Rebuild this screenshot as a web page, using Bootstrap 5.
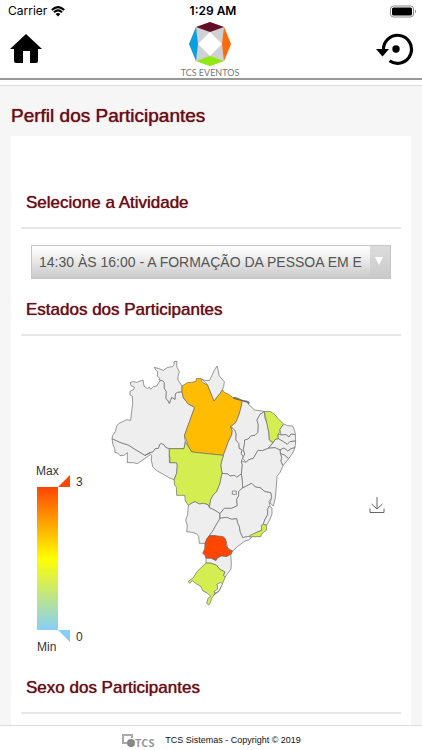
<!DOCTYPE html>
<html lang="pt-BR">
<head>
<meta charset="utf-8">
<meta name="viewport" content="width=device-width, initial-scale=1">
<title>TCS Eventos - Perfil dos Participantes</title>
<link href="https://cdn.jsdelivr.net/npm/bootstrap@5.3.0/dist/css/bootstrap.min.css" rel="stylesheet">
<style>
body{font-family:"Liberation Sans",Arial,sans-serif;background:#f6f6f6;color:#333}
.topbar{border-bottom:2px solid #999}
.status{font-family:Inter,sans-serif;font-size:12px;line-height:22px;height:22px}
.status-time{font-weight:600}
.brand-name{font-family:Lato,sans-serif;font-size:9px;line-height:10px;color:#777}
.strip{height:6px;border-bottom:1px solid #ddd}
.heading{color:#6a0f18;font-weight:400;text-shadow:0 0 1px #6a0f18;margin:0}
.heading-page{font-size:19px;line-height:24px;padding:18px 11px 8px}
.heading-block{font-size:17px;line-height:24px;padding:0 5px 12px;border-bottom:2px solid #e7e7e9}
.panel{padding:55px 10px 11px;margin:0 11px}
.activity-field{padding:16px 10px 19px}
.activity{appearance:none;width:100%;height:34px;border:1px solid #c6c6c6;border-radius:0;padding:0 27px 0 7px;font-size:14px;color:#555;overflow:hidden;
background:url("data:image/svg+xml,%3Csvg xmlns='http://www.w3.org/2000/svg' width='8' height='8'%3E%3Cpath d='M0 0h8L4 8z' fill='white'/%3E%3C/svg%3E") no-repeat right 7px top 11px,linear-gradient(#dcdcdc,#cacaca) no-repeat right/20px 100%,linear-gradient(#fff,#f2f2f2 30%,#c9c9c9)}
.chart{padding:24px 16px 20px 15px}
.legend{margin-top:100px;margin-right:22px}
.legend text{font-size:12px;fill:#333}
.save{margin-top:136px}
.state path{fill:#eee;stroke:#666;stroke-width:2;stroke-linejoin:round}
.state .n1{fill:#d4ee51}
.state .n2{fill:#ffbc00}
.state .n3{fill:#ff4500}
.state .lagoon{fill:#fff}
.state .coast{fill:none;stroke-width:4}
.bottombar{border-top:1px solid #ddd;height:26px;font-size:9px;color:#111}
.icon-link-plain{color:#000;line-height:0}
</style>
<script src="https://cdn.jsdelivr.net/npm/bootstrap@5.3.0/dist/js/bootstrap.bundle.min.js"></script>
</head>
<body class="d-flex flex-column min-vh-100">
<header class="topbar bg-white">
  <div class="status row g-0 text-black">
    <div class="col d-flex align-items-center ps-2 gap-1">Carrier
      <svg width="14" height="11" viewBox="0 0 14 11" fill="none" stroke="#000" stroke-width="2"><path d="M.8 4Q7-1.8 13.200 4M3 6.300Q7 2.500 11 6.300"/><path d="M7 10.500 4.600 8Q7 6 9.400 8z" fill="#000" stroke="none"/></svg>
    </div>
    <div class="col text-center status-time">1:29 AM</div>
    <div class="col d-flex align-items-center justify-content-end pe-1">
      <svg width="28" height="13" viewBox="0 0 28 13"><rect x=".5" y="1" width="23" height="11" rx="3" fill="#fff" stroke="#888"/><rect x="2" y="2.500" width="20" height="8" rx="1.500"/><path d="M25 4.500q2 2 0 4z" fill="#888"/></svg>
    </div>
  </div>
  <div class="d-flex justify-content-between align-items-start ps-2 pe-2">
    <a href="#" class="icon-link-plain pt-2" aria-label="Início"><svg width="36" height="36" viewBox="0 0 36 36"><path d="M18 4 34 19h-4v12q0 2-2 2h-6V21h-7v12H8q-2 0-2-2V19H2z" fill="currentColor"/></svg></a>
    <div class="d-flex flex-column align-items-center">
      <svg width="44" height="46" viewBox="0 0 44 46">
        <path d="M8 5 22 0 36 5 43 22 36 39 22 44 8 39 1 22z" fill="#d0d1d3"/>
        <path d="M8 5 22 0 36 5 22 10z" fill="#650c28"/><path d="M36 5 43 22 36 39 34 22z" fill="#ff6a0b"/><path d="M8 5 1 22 8 39 10 22z" fill="#0aa0e0"/><path d="M8 39 22 34 36 39 22 44z" fill="#91e812"/>
        <path d="M22 10 34 22 22 34 10 22z" fill="#fff"/>
      </svg>
      <span class="brand-name">TCS EVENTOS</span>
    </div>
    <a href="#" class="icon-link-plain pt-2" aria-label="Atualizar"><svg width="38" height="38" viewBox="0 0 38 38"><path d="M7.500 20A14 14 0 1 1 13.500 30.800" fill="none" stroke="currentColor" stroke-width="3.200"/><path d="M0 19h13L6.500 26.500z" fill="currentColor"/><circle cx="20" cy="19" r="3.700" fill="currentColor"/></svg></a>
  </div>
</header>
<div class="strip bg-white"></div>
<main class="flex-grow-1">
  <h1 class="heading heading-page">Perfil dos Participantes</h1>
  <section class="panel bg-white">
    <h2 class="heading heading-block"><label for="activity">Selecione a Atividade</label></h2>
    <div class="activity-field">
      <select id="activity" class="activity d-block"><option>14:30 ÀS 16:00 - A FORMAÇÃO DA PESSOA EM E</option></select>
    </div>
    <h2 class="heading heading-block">Estados dos Participantes</h2>
    <div class="chart d-flex align-items-start">
      <svg class="legend flex-shrink-0" width="52" height="196" viewBox="0 0 52 196" role="img" aria-label="Escala de 0 a 3">
        <defs><linearGradient id="scale" x2="0" y2="1"><stop stop-color="#ff4500"/><stop offset=".5" stop-color="#ff0"/><stop offset="1" stop-color="#87cefa"/></linearGradient></defs>
        <text x="0" y="15">Max</text><text x="40" y="26">3</text>
        <rect x="1" y="27" width="21" height="143" fill="url(#scale)"/>
        <path d="M22 27 34 15V27z" fill="#ff4500"/><path d="M22 170H34V182z" fill="#87cefa"/>
        <text x="40" y="181">0</text><text x="1" y="191">Min</text>
      </svg>
      <svg class="state" width="190" height="256" viewBox="30 30 570 768" role="img" aria-label="Mapa dos estados do Brasil">
        <path d="M36 266 60 277 85 285 105 298 135 316 148 308 152 313 140 322 128 330 112 341 100 338H82V308L72 316 60 317 53 309 45 308 44 295 39 285z"/>
        <path d="M135 316 150 307 158 306 165 296 175 295 179 283 184 280 192 284 197 292 208 296V338H229L232 345 230 370 222 389 205 382 190 373 170 362 158 350 154 330 155 316 148 310z"/>
        <path d="M91 97 93 107 103 111 102 118 90 124 90 135 97 139 98 160 95 185 92 211 80 209 70 214 57 220 50 228 46 245 38 257 36 266 60 277 85 285 105 298 135 316 150 307 158 306 165 296 175 295 179 283 184 280 192 284 197 292 208 296H252L256 275 253 258 263 230 284 172 265 162 250 143 246 125 232 127 226 131 225 148 215 142 208 160 203 150 198 146 199 125 193 115 193 98 188 92 180 92 170 108 160 110 152 118 148 111 142 116 132 108 129 90 110 97 100 95z"/>
        <path d="M163 52 177 56 190 61 203 52 217 50 222 44 222 35 231 34 230 45 231 52 238 65 234 80 234 90 246 108V125L232 127 226 131 225 148 215 142 208 160 203 150 198 146 199 125 193 115 193 98 188 92 177 90 179 85 172 78 173 65 167 60z"/>
        <path class="n2" d="M246 108 262 98 275 97 288 94 289 86 303 85 305 95 316 102 323 105 328 118 335 135 342 153 350 142 360 130 367 119 373 127 388 134 397 142 410 143 427 151 424 168 420 184 415 200 407 218 392 230 397 242 395 255 385 275 378 295 370 316 275 306 265 290 259 270 253 258 263 230 284 172 265 162 250 143 246 125z"/>
        <path d="M305 88 315 91 328 92 336 76 343 60 351 48 354 58 357 76 363 84 373 95 371 110 367 119 360 130 350 142 342 153 335 135 328 118 323 105 316 97z"/>
        <path d="M427 151 440 153 448 156 446 164 456 172 463 180 480 182 493 185 480 193 471 210 475 225 474 247 465 256 452 258 445 267 434 270 433 285 430 298 434 312 430 325 423 310 426 300 417 295 416 280 407 270 408 252 404 240 392 230 407 218 415 200 420 184 424 168z"/>
        <path class="coast" d="M400 144 424 151 435 154 443 156 446 162"/>
        <path d="M392 230 404 240 408 252 407 270 416 280 417 295 426 300 423 310 430 321 424 333 427 345 424 372 410 382 404 376 390 378 383 372 366 370 362 345 370 316 378 295 385 275 395 255 397 242z"/>
        <path d="M493 185 495 205 501 220 506 245 508 270 518 278 505 295 487 302 474 301 460 325 447 329 438 337 428 325 434 312 430 298 433 285 434 270 445 267 452 258 465 256 474 247 475 225 471 210 480 193z"/>
        <path class="n1" d="M493 185 510 184 525 194 536 208 551 222 540 238 541 247 534 252 535 266 525 269 520 278 508 270 507 250 501 222z"/>
        <path d="M551 222 563 227 578 228 584 242 586 254 573 252 567 261 558 254 543 255 541 247 540 238z"/>
        <path d="M586 254 587 273 570 275 562 283 550 275 535 266 534 252 543 255 558 254 567 261 573 252z"/>
        <path d="M587 273 585 293 574 296 563 303 552 294 540 300 525 293 505 295 520 278 525 269 535 266 550 275 562 283 570 275z"/>
        <path d="M585 293 578 309 566 326 553 315 541 311 540 300 552 294 563 303 574 296z"/>
        <path d="M566 326 549 347 542 333 545 323 541 311 553 315z"/>
        <path d="M424 333 438 337 447 329 460 325 474 301 487 302 505 295 525 293 540 300 541 311 545 323 542 333 549 347 541 366 531 379 529 410 526 443 520 468 510 459 515 442 512 428 495 425 480 413 466 411 455 400 445 405 428 414 427 395 424 372 427 345z"/>
        <path class="n1" d="M208 296H252L256 275 265 290 275 306 370 316 362 345 366 370 360 400 350 425 340 435 332 449 329 470 324 464 310 460 298 462 285 455 276 459 265 466 256 453 254 436H230L229 412 224 405 222 390 230 370 232 345 229 338H210V320H208z"/>
        <path d="M366 370 383 372 390 378 404 376 410 382 424 372 427 395 428 414 416 424 416 438 410 448 412 467 395 475 373 475 360 491 345 481 328 473 332 449 340 435 350 425 360 400z"/>
        <path d="M397 423H409V433H397z"/>
        <path d="M265 466 276 459 285 455 298 462 310 460 324 464 328 473 345 481 360 491 358 509 347 527 339 542 328 557 315 580 298 580 296 560 290 551 275 547 260 545 262 528 257 510 263 493z"/>
        <path d="M428 414 445 405 455 400 466 411 480 413 495 425 512 428 515 442 507 455 510 468 503 477 503 494 494 510 490 523 485 541 470 547 450 559 428 563 420 545 418 530 413 520 410 506 395 508 380 502 360 505 360 491 373 475 395 475 412 467 410 448 416 438 416 424z"/>
        <path d="M507 468 516 474 516 492 509 510 500 526 490 523 494 510 503 494 503 477z"/>
        <path class="n1" d="M485 541 484 526 490 523 500 526 499 541 487 549 482 560 459 560 445 562 450 556 470 547z"/>
        <path d="M360 505 380 502 395 508 410 506 413 520 418 530 420 545 428 563 445 559 455 562 446 570 435 573 412 590 397 605 382 592 379 573 370 565 345 557 328 557 339 542 347 527 358 509z"/>
        <path class="n3" d="M328 557 345 557 370 560 377 568 379 588 387 599 397 602 394 613 380 620 364 618 352 625 348 632 333 625 318 625 315 616 308 610 314 596 315 580 320 566z"/>
        <path d="M318 625 333 625 348 632 352 625 364 618 380 620 392 613 394 638 393 657 385 668 375 681 370 676 375 666 359 658 350 646 335 640 318 639z"/>
        <path class="n1" d="M318 639 335 640 350 646 359 658 375 666 370 676 376 681 367 702 357 724 344 733 334 746 332 757 326 765 320 760 324 745 332 739 323 730 308 722 303 710 290 702 277 692 269 700 265 694 280 683 290 666 304 652z"/>
        <path class="lagoon" d="M362 697 367 702 357 722 346 730 342 725 352 718 353 707 349 704z"/>
        <path d="M346 726 342 735 351 727"/>
      </svg>
      <button type="button" class="save btn p-0 border-0 rounded-0 ms-auto lh-1" aria-label="Salvar imagem"><svg width="16" height="18" viewBox="0 0 16 18" fill="none" stroke="#666"><path d="M8 1V13M2.500 8 8 13 13.500 8M1 12.500V16.500H15V12.500"/></svg></button>
    </div>
    <h2 class="heading heading-block">Sexo dos Participantes</h2>
  </section>
</main>
<footer class="bottombar bg-white d-flex align-items-center justify-content-center gap-2 pb-1 pt-2">
  <svg width="36" height="16" viewBox="0 0 36 16" role="img" aria-label="TCS"><path d="M6 10H2V2H11V5" fill="none" stroke="#aaa" stroke-width="2"/><circle cx="10" cy="10" r="4" fill="#888"/><text x="14" y="14" font-family="Open Sans, sans-serif" font-size="11" font-weight="700" fill="#999">TCS</text></svg>
  <span>TCS Sistemas - Copyright © 2019</span>
</footer>
</body>
</html>
